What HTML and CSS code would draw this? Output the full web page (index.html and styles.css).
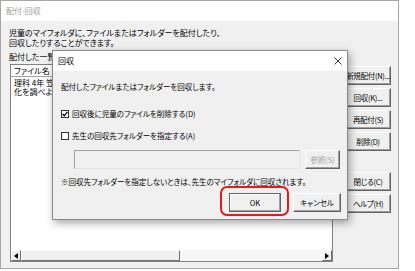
FILE: index.html
```html
<!DOCTYPE html>
<html lang="ja">
<head>
<meta charset="utf-8">
<link rel="stylesheet" href="styles.css">
</head>
<body>
<div class="win">
  <div class="win-title">配付-回収</div>
  <div class="win-body">
    <p class="intro">児童のマイフォルダに、ファイルまたはフォルダーを配付したり、<br>回収したりすることができます。</p>
    <div class="label">配付した一覧</div>
    <div class="main">
      <div class="list">
        <div class="list-head"><div class="hcell">ファイル名</div><div class="hcell rest"></div></div>
        <div class="list-items">
          <div class="item">理科 4年 笠原先生<br>化を調べよう</div>
        </div>
        <div class="hscroll">
          <div class="arrow"><svg width="4" height="6" viewBox="0 0 4 6"><path d="M4 0 L0 3 L4 6 Z" fill="#000"/></svg></div>
          <div class="thumb"></div>
          <div class="track"></div>
          <div class="arrow"><svg width="4" height="6" viewBox="0 0 4 6"><path d="M0 0 L4 3 L0 6 Z" fill="#000"/></svg></div>
        </div>
      </div>
      <div class="buttons">
        <div class="btn">新規配付(N)...</div>
        <div class="btn">回収(K)...</div>
        <div class="btn">再配付(S)</div>
        <div class="btn">削除(D)</div>
        <div class="btn sep">閉じる(C)</div>
        <div class="btn">ヘルプ(H)</div>
      </div>
    </div>
  </div>
</div>

<div class="dialog">
  <div class="dlg-title">
    <span>回収</span>
    <svg class="close" width="8" height="8" viewBox="0 0 8 8"><path d="M0.5 0.5 L7.5 7.5 M7.5 0.5 L0.5 7.5" stroke="#222" stroke-width="0.9" fill="none"/></svg>
  </div>
  <div class="dlg-body">
    <div class="line t1">配付したファイルまたはフォルダーを回収します。</div>
    <div class="check c1">
      <span class="box"><svg width="6" height="6" viewBox="0 0 6 6"><path d="M0.6 3 L2.3 4.8 L5.4 0.9" stroke="#000" stroke-width="1.3" fill="none"/></svg></span>
      <span>回収後に児童のファイルを削除する(D)</span>
    </div>
    <div class="check c2">
      <span class="box"></span>
      <span>先生の回収先フォルダーを指定する(A)</span>
    </div>
    <div class="field-row">
      <div class="field"></div>
      <div class="btn2 disabled">参照(S)</div>
    </div>
    <div class="line note">※回収先フォルダーを指定しないときは、先生のマイフォルダに回収されます。</div>
    <div class="dlg-buttons">
      <div class="btn2 ok">OK<span class="ring"></span></div>
      <div class="btn2 cancel">キャンセル</div>
    </div>
  </div>
</div>
</body>
</html>
```

FILE: styles.css
```css
* { box-sizing: border-box; }
html, body {
  margin: 0;
  padding: 0;
  background: #ffffff;
}
body {
  font-family: "Noto Sans CJK JP", "Noto Sans", sans-serif;
  font-size: 8px;
  line-height: 10px;
  font-feature-settings: "palt";
  color: #000;
  width: 415px;
  height: 271px;
  position: relative;
  overflow: hidden;
}
.win {
  width: 399px;
  height: 269px;
  border: 1px solid #a6a6a6;
  display: flex;
  flex-direction: column;
}
.win-title {
  height: 20px;
  background: #fff;
  color: #9a9a9a;
  padding: 5px 0 0 5px;
}
.win-body {
  flex: 1;
  background: #f0f0f0;
  padding: 7px 0 6px 8px;
  display: flex;
  flex-direction: column;
}
.intro { margin: 0; }
.label { margin-top: 4px; }
.main {
  flex: 1;
  display: flex;
  margin-top: 2px;
}
.list {
  width: 323px;
  margin-left: 1px;
  background: #fff;
  border: 1px solid #828282;
  display: flex;
  flex-direction: column;
}
.list-head {
  display: flex;
  height: 12px;
}
.hcell {
  width: 100px;
  border-right: 1px solid #a0a0a0;
  border-bottom: 1px solid #a0a0a0;
  padding: 1px 0 0 3px;
  line-height: 10px;
}
.hcell.rest { flex: 1; border-right: 0; }
.list-items {
  flex: 1;
  padding: 0 0 0 3px;
}
.item { padding-top: 1px; line-height: 9px; }
.hscroll {
  height: 11px;
  display: flex;
  background: #f0f0f0;
}
.arrow {
  width: 10px;
  height: 11px;
  border: 1px solid;
  border-color: #fff #707070 #707070 #fff;
  background: #f0f0f0;
  display: flex;
  align-items: center;
  justify-content: center;
}
.thumb {
  width: 159px;
  border: 1px solid;
  border-color: #fff #707070 #707070 #fff;
  background: #f0f0f0;
}
.track {
  flex: 1;
  background: #f7f7f7;
}
.buttons {
  margin-left: 12px;
  margin-top: 2px;
  display: flex;
  flex-direction: column;
  gap: 3px;
}
.btn, .btn2 {
  width: 46px;
  height: 19px;
  border: 1px solid;
  border-color: #fdfdfd #646464 #646464 #fdfdfd;
  box-shadow: inset -1px -1px 0 #a0a0a0;
  background: #f0f0f0;
  display: flex;
  align-items: center;
  justify-content: center;
  white-space: nowrap;
}
.btn {
  font-size: 7.5px;
  letter-spacing: -0.3px;
}
.btn.sep { margin-top: 18px; }

.dialog {
  position: absolute;
  left: 52px;
  top: 50px;
  width: 296px;
  height: 170px;
  border: 1px solid #8a8a8a;
  background: #f0f0f0;
  box-shadow: 2px 3px 8px rgba(0,0,0,0.35);
  display: flex;
  flex-direction: column;
  font-size: 7.5px;
}
.dlg-title {
  height: 20px;
  background: #fff;
  padding: 0 0 0 5px;
  display: flex;
  align-items: center;
  justify-content: space-between;
  font-size: 8px;
}
.close { margin-right: 5px; }
.dlg-body {
  padding: 11px 6px 0 8px;
  display: flex;
  flex-direction: column;
}
.check {
  display: flex;
  align-items: center;
  gap: 3px;
}
.c1 { margin-top: 17px; }
.c2 { margin-top: 12px; }
.box {
  width: 8px;
  height: 8px;
  background: #fff;
  border: 1px solid #333;
  display: flex;
  align-items: center;
  justify-content: center;
}
.field-row {
  margin-top: 9px;
  margin-left: 13px;
  display: flex;
  gap: 5px;
}
.field {
  width: 226px;
  height: 19px;
  border: 1px solid;
  border-color: #a0a0a0 #e3e3e3 #e3e3e3 #a0a0a0;
  background: #f0f0f0;
}
.btn2 { width: 35px; }
.disabled { color: #a0a0a0; }
.note { margin-top: 8px; }
.dlg-buttons {
  margin-top: 6px;
  display: flex;
  justify-content: flex-end;
  gap: 12px;
}
.ok {
  width: 52px;
  position: relative;
  border-color: #646464;
  box-shadow: inset -1px -1px 0 #a0a0a0, inset 1px 1px 0 #fff;
}
.cancel { width: 48px; }
.ring {
  position: absolute;
  left: -10px;
  top: -8px;
  width: 69px;
  height: 30px;
  border: 2px solid #e41b1b;
  border-radius: 7px;
}
```
